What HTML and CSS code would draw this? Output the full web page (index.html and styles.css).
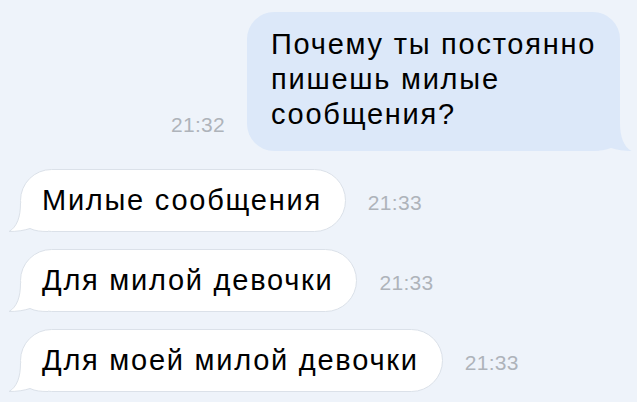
FILE: index.html
```html
<!DOCTYPE html>
<html lang="ru">
<head>
    <meta charset="UTF-8">
    <meta name="viewport" content="width=device-width, initial-scale=1.0">
    <title>Сообщения</title>
    <link rel="stylesheet" href="styles.css">
</head>
<body>

<div class="chat">
    <div class="row row-out">
        <span class="time">21:32</span>
        <div class="bubble bubble-out">
            <svg class="tail tail-out" width="40" height="28" viewBox="0 0 40 28">
                <path d="M0 0 H28 C28 14 32 24 39.5 28 C32 28 25 27 19 25 C14 27 8 28 0 28 Z" fill="#dce8f9"/>
            </svg>
            <span class="text">Почему ты постоянно<br>пишешь милые<br>сообщения?</span>
        </div>
    </div>

    <div class="row row-in">
        <div class="bubble bubble-in">
            <svg class="tail tail-in" width="40" height="29" viewBox="0 0 40 29">
                <path d="M40 0 H12.5 C12.5 14 9 24 1 28.5 C9 28.5 16 27.5 22 25.5 C27 28 33 28.5 40 28.5 Z" fill="#fff"/>
                <path d="M12.5 0 C12.5 14 9 24 1 28.5 C9 28.5 16 27.5 22 25.5 C27 28 33 28.5 40 28.5" fill="none" stroke="#dbe1e9"/>
            </svg>
            <span class="text">Милые сообщения</span>
        </div>
        <span class="time">21:33</span>
    </div>

    <div class="row row-in">
        <div class="bubble bubble-in">
            <svg class="tail tail-in" width="40" height="29" viewBox="0 0 40 29">
                <path d="M40 0 H12.5 C12.5 14 9 24 1 28.5 C9 28.5 16 27.5 22 25.5 C27 28 33 28.5 40 28.5 Z" fill="#fff"/>
                <path d="M12.5 0 C12.5 14 9 24 1 28.5 C9 28.5 16 27.5 22 25.5 C27 28 33 28.5 40 28.5" fill="none" stroke="#dbe1e9"/>
            </svg>
            <span class="text">Для милой девочки</span>
        </div>
        <span class="time">21:33</span>
    </div>

    <div class="row row-in">
        <div class="bubble bubble-in">
            <svg class="tail tail-in" width="40" height="29" viewBox="0 0 40 29">
                <path d="M40 0 H12.5 C12.5 14 9 24 1 28.5 C9 28.5 16 27.5 22 25.5 C27 28 33 28.5 40 28.5 Z" fill="#fff"/>
                <path d="M12.5 0 C12.5 14 9 24 1 28.5 C9 28.5 16 27.5 22 25.5 C27 28 33 28.5 40 28.5" fill="none" stroke="#dbe1e9"/>
            </svg>
            <span class="text">Для моей милой девочки</span>
        </div>
        <span class="time">21:33</span>
    </div>
</div>

</body>
</html>
```

FILE: styles.css
```css
body {
    margin: 0;
    background-color: #eef3fa;
    font-family: "Liberation Sans", Arial, sans-serif;
    color: #000;
}
.chat {
    display: flex;
    flex-direction: column;
    gap: 17px;
    padding: 12px 17px 0 20px;
}
.row {
    display: flex;
    gap: 22px;
}
.row-out {
    justify-content: flex-end;
    align-items: flex-end;
    margin-bottom: 1px;
}
.row-in {
    align-items: center;
}
.bubble {
    position: relative;
    font-size: 29px;
    line-height: 35px;
    letter-spacing: 1.75px;
    white-space: nowrap;
}
.bubble .text {
    position: relative;
}
.bubble-out {
    width: 373px;
    box-sizing: border-box;
    padding: 15px 26px 19px 24px;
    background-color: #dce8f9;
    border-radius: 27px;
}
.bubble-in {
    padding: 13px 23px 13px 21px;
    background-color: #fff;
    border: 1px solid #dbe1e9;
    border-radius: 32px;
}
.time {
    font-size: 21px;
    color: #aeb3ba;
    letter-spacing: 0.3px;
}
.row-out .time {
    margin-bottom: 14px;
}
.row-in .time {
    margin-top: 4px;
}
.tail {
    position: absolute;
    bottom: 0;
}
.tail-out {
    right: -12px;
}
.tail-in {
    left: -13px;
    bottom: -1px;
}
```
